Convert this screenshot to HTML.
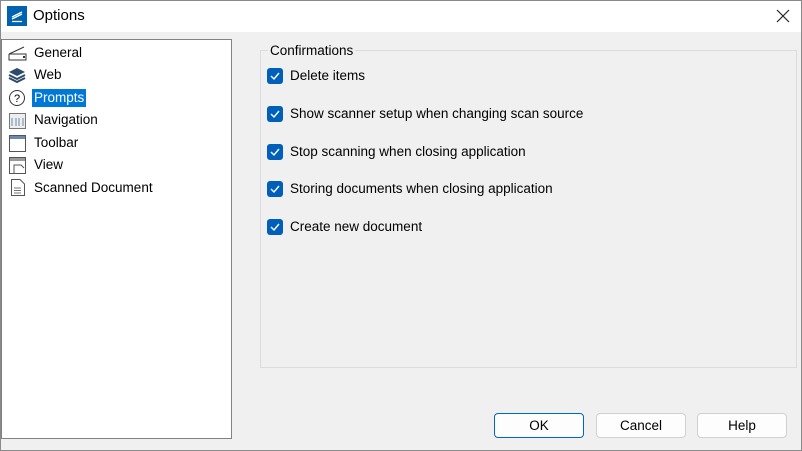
<!DOCTYPE html>
<html><head><style>
body{margin:0;width:802px;height:451px;overflow:hidden;font-family:"Liberation Sans",sans-serif;font-size:13.5px;color:#000}
.win{position:absolute;left:0;top:0;width:802px;height:451px;background:#f0f0f0}
.frame{position:absolute;left:0;top:0;width:802px;height:451px;box-sizing:border-box;border:1px solid #8a8a8a;z-index:9}
.title{position:absolute;left:0;top:0;width:802px;height:32px;background:#fff}
.abs{position:absolute}
.list{position:absolute;left:1px;top:39px;width:229px;height:398px;background:#fff;border:1px solid #828282}
.item{position:absolute;left:32px;height:18px;line-height:18px}
.group{position:absolute;left:260px;top:50px;width:535px;height:316px;border:1px solid #dcdcdc}
.cb{position:absolute;left:267px;width:16px;height:16px;background:#005fb8;border-radius:3px}
.cb svg{position:absolute;left:0;top:0}
.lbl{position:absolute;left:290px;line-height:16px}
.btn{position:absolute;top:413px;width:88px;height:23px;border:1px solid #d0d0d0;border-radius:4px;background:#fdfdfd;text-align:center;line-height:23px}
</style></head><body>
<div class="win">
<div class="title"></div>
<div class="abs" style="left:7px;top:6px;width:20px;height:20px;background:#0063b1"><svg width="20" height="20"><path d="M5 13 L15 8 M5 15.5 H15 M5 11 L15 6" stroke="#fff" stroke-width="1.3" fill="none"/></svg></div>
<div class="abs" style="left:33px;top:7px;font-size:15px">Options</div>
<svg class="abs" style="left:775px;top:8px" width="16" height="16"><path d="M2 2 L14 14 M14 2 L2 14" stroke="#222" stroke-width="1.2"/></svg>
<div class="list">
<svg class="abs" style="left:6px;top:5px" width="20" height="16"><path d="M1 9 L16 2 M1 9 V15 H18 V9 H1" stroke="#333" fill="none"/><rect x="15" y="11" width="2" height="2" fill="#333"/></svg>
<div class="item" style="top:4px">General</div>
<svg class="abs" style="left:6px;top:27px" width="18" height="16"><path d="M9 1 L17 5 L9 9 L1 5 Z" fill="#2c4a6b"/><path d="M1 8 L9 12 L17 8 M1 11 L9 15 L17 11" stroke="#2c4a6b" stroke-width="2" fill="none"/></svg>
<div class="item" style="top:26px">Web</div>
<svg class="abs" style="left:6px;top:49px" width="18" height="18"><circle cx="9" cy="9" r="7.5" stroke="#333" fill="none"/><text x="9" y="13" font-size="11" text-anchor="middle" font-family="Liberation Sans">?</text></svg>
<div class="item" style="top:49px;left:30px;background:#0078d7;color:#fff;padding:0 2px">Prompts</div>
<svg class="abs" style="left:7px;top:73px" width="17" height="16"><rect x="0.5" y="0.5" width="16" height="15" fill="#eee" stroke="#777"/><path d="M3 5 V13 M7 5 V13 M10 5 V13 M14 5 V13" stroke="#6a8ab0"/></svg>
<div class="item" style="top:71px">Navigation</div>
<svg class="abs" style="left:7px;top:95px" width="17" height="17"><rect x="0.5" y="0.5" width="16" height="16" fill="#fff" stroke="#555"/><rect x="1" y="1" width="15" height="3" fill="#6a8ab0"/></svg>
<div class="item" style="top:94px">Toolbar</div>
<svg class="abs" style="left:7px;top:117px" width="17" height="17"><rect x="0.5" y="0.5" width="16" height="16" fill="#fff" stroke="#555"/><rect x="1" y="1" width="15" height="3" fill="#999"/><path d="M5 16 V8 H12 L15 11" stroke="#555" fill="none"/></svg>
<div class="item" style="top:116px">View</div>
<svg class="abs" style="left:9px;top:139px" width="14" height="17"><path d="M0.5 0.5 H9 L13.5 5 V16.5 H0.5 Z" fill="#fff" stroke="#555"/><path d="M3 9 H10 M3 11.5 H10 M3 14 H10" stroke="#777"/></svg>
<div class="item" style="top:139px">Scanned Document</div>
</div>
<div class="group"></div>
<div class="abs" style="left:268px;top:43px;background:#f0f0f0;padding:0 2px">Confirmations</div>
<div class="cb" style="top:68px"><svg width="16" height="16"><path d="M4 8 L7 11 L12 5" stroke="#fff" stroke-width="1.4" fill="none"/></svg></div>
<div class="lbl" style="top:68px">Delete items</div>
<div class="cb" style="top:106px"><svg width="16" height="16"><path d="M4 8 L7 11 L12 5" stroke="#fff" stroke-width="1.4" fill="none"/></svg></div>
<div class="lbl" style="top:106px">Show scanner setup when changing scan source</div>
<div class="cb" style="top:144px"><svg width="16" height="16"><path d="M4 8 L7 11 L12 5" stroke="#fff" stroke-width="1.4" fill="none"/></svg></div>
<div class="lbl" style="top:144px">Stop scanning when closing application</div>
<div class="cb" style="top:181px"><svg width="16" height="16"><path d="M4 8 L7 11 L12 5" stroke="#fff" stroke-width="1.4" fill="none"/></svg></div>
<div class="lbl" style="top:181px">Storing documents when closing application</div>
<div class="cb" style="top:219px"><svg width="16" height="16"><path d="M4 8 L7 11 L12 5" stroke="#fff" stroke-width="1.4" fill="none"/></svg></div>
<div class="lbl" style="top:219px">Create new document</div>
<div class="btn" style="left:494px;border-color:#0067c0">OK</div>
<div class="btn" style="left:596px">Cancel</div>
<div class="btn" style="left:697px">Help</div>
</div>
<div class="frame"></div>
</body></html>
